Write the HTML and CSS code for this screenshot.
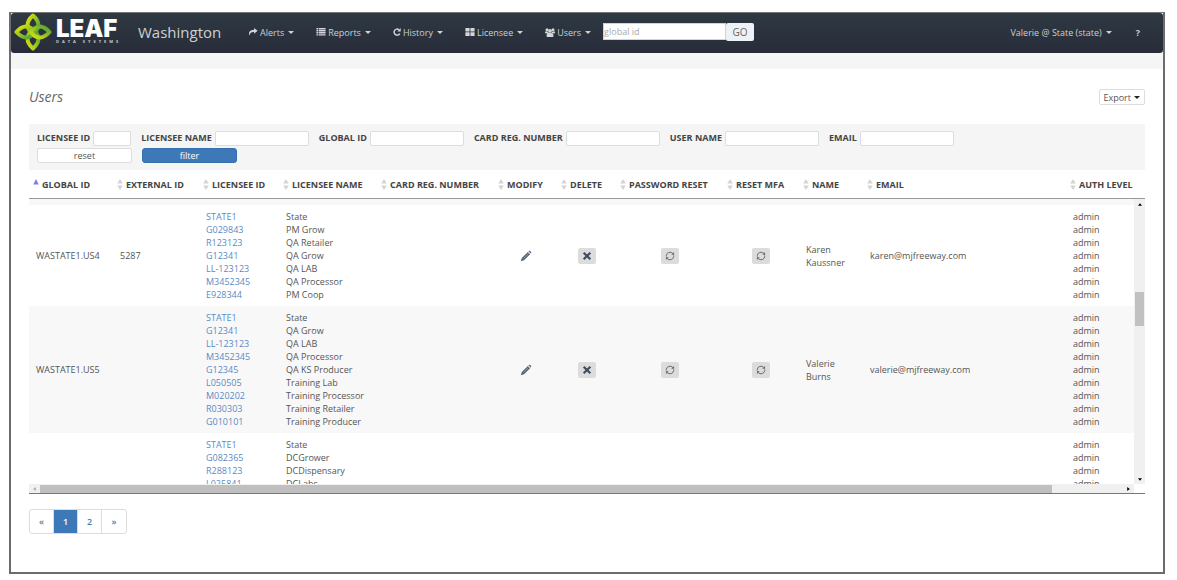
FILE: index.html
```
<!DOCTYPE html>
<html lang="en">
<head>
<meta charset="utf-8">
<title>Users - Leaf Data Systems</title>
<link rel="stylesheet" href="styles.css">
</head>
<body>
<svg class="defs" aria-hidden="true">
  <symbol id="i-edit" viewBox="0 0 16 16"><path fill="#5b6577" d="M1 15l1.400-4.400L10.500 2.500l3 3L5.400 13.600z"/><path fill="#5b6577" d="M11.200 1.800q1-1.200 2.300-.6l1.300 1.300q.7 1.300-.6 2.300z"/><path stroke="#98a0ae" stroke-width="1" d="M4.500 11.500l7-7"/></symbol>
  <symbol id="i-x" viewBox="0 0 12 12"><path d="M2 2l8 8M10 2l-8 8" stroke="#3f4c5e" stroke-width="2.600" fill="none"/></symbol>
  <symbol id="i-refresh" viewBox="0 0 16 16"><path d="M2 9V7.500a6 6 0 0 1 10.500-3.500M14 7v1.500a6 6 0 0 1-10.500 3.500" fill="none" stroke="#666" stroke-width="1.500"/><path fill="#666" d="M14.500 1.500V6H10zM1.500 14.500V10H6z"/></symbol>
  <symbol id="i-sort" viewBox="0 0 6 12"><path d="M3 0l3 5H0zM3 12l3-5H0z" fill="#d4d4d4"/></symbol>
</svg>
<div class="frame">
  <header class="navbar">
    <a class="brand" href="#" aria-label="Leaf Data Systems">
      <svg class="logo" viewBox="0 0 38 38">
        <defs>
          <linearGradient id="g1" x1="0" y1="0" x2="1" y2="1"><stop offset="0" stop-color="#e6e60a"/><stop offset="1" stop-color="#3f9a3c"/></linearGradient>
          <linearGradient id="g2" x1="1" y1="0" x2="0" y2="1"><stop offset="0" stop-color="#4aa03a"/><stop offset="1" stop-color="#dfe20c"/></linearGradient>
        </defs>
        <g fill="none" stroke-width="4" stroke-linejoin="round">
          <path stroke="url(#g1)" d="M19 2.500C11.500 9 12 16 19 21C26 16 26.500 9 19 2.500z"/>
          <path stroke="url(#g2)" d="M19 35.500C11.500 29 12 22 19 17C26 22 26.500 29 19 35.500z"/>
          <path stroke="url(#g1)" d="M2.500 19C9 11.500 16 12 21 19C16 26 9 26.500 2.500 19z"/>
          <path stroke="url(#g2)" d="M35.500 19C29 11.500 22 12 17 19C22 26 29 26.500 35.500 19z"/>
        </g>
      </svg>
      <span class="wordmark"><span class="leaf">LEAF</span><span class="tag">DATA SYSTEMS</span></span>
    </a>
    <span class="place">Washington</span>
    <nav class="menu">
      <button type="button"><svg class="ic" viewBox="0 0 16 14"><path d="M10 0l6 5-6 5V7C5 7 3 8 2.500 13 0 10 0 3.500 10 3z"/></svg>Alerts<i class="caret"></i></button>
      <button type="button"><svg class="ic" viewBox="0 0 16 14"><path d="M0 0h3v2.500H0zM4 0h12v2.500H4zM0 3.600h3v2.500H0zM4 3.600h12v2.500H4zM0 7.200h3v2.500H0zM4 7.200h12v2.500H4zM0 10.800h3v2.500H0zM4 10.800h12v2.500H4z"/></svg>Reports<i class="caret"></i></button>
      <button type="button"><svg class="ic ic-sq" viewBox="0 0 14 14"><path d="M11.800 9.800A5.300 5.300 0 1 1 10.500 3" fill="none" stroke="#d3d6da" stroke-width="2.500"/><path d="M13.500 0v6.200H7.500z"/></svg>History<i class="caret"></i></button>
      <button type="button"><svg class="ic" viewBox="0 0 16 14"><path d="M0 0h7.300v6.200H0zM8.700 0H16v6.200H8.700zM0 7.600h7.300v6.200H0zM8.700 7.600H16v6.200H8.700z"/></svg>Licensee<i class="caret"></i></button>
      <button type="button"><svg class="ic ic-users" viewBox="0 0 18 16"><circle cx="3.600" cy="3" r="2.700"/><circle cx="14.400" cy="3" r="2.700"/><circle cx="9" cy="5" r="3.500"/><path d="M0 9.500V6.500q2-1.500 5 0Q5.500 8 6.500 9.500zM18 9.500V6.500q-2-1.500-5 0Q12.500 8 11.500 9.500zM3 16V11q1-2.500 3.500-2.500h5Q14 8.500 15 11v5z"/></svg>Users<i class="caret"></i></button>
    </nav>
    <form class="search"><input type="text" placeholder="global id" aria-label="global id"><button type="button">GO</button></form>
    <div class="account">
      <button type="button">Valerie @ State (state)<i class="caret"></i></button>
      <button type="button" class="help">?</button>
    </div>
  </header>
  <div class="strip"></div>
  <main class="content">
    <div class="title-row"><h1>Users</h1><button type="button" class="export">Export<i class="caret"></i></button></div>
    <form class="filters">
      <div class="fields">
        <label>LICENSEE ID<input class="short" type="text"></label>
        <label>LICENSEE NAME<input type="text"></label>
        <label>GLOBAL ID<input type="text"></label>
        <label>CARD REG. NUMBER<input type="text"></label>
        <label>USER NAME<input type="text"></label>
        <label>EMAIL<input type="text"></label>
      </div>
      <div class="actions"><button type="reset">reset</button><button type="button" class="primary">filter</button></div>
    </form>
    <div class="head">
      <table>
        <colgroup><col class="c1"><col class="c2"><col class="c3"><col class="c4"><col class="c5"><col class="c6"><col class="c7"><col class="c8"><col class="c9"><col class="c10"><col><col class="c12"></colgroup>
        <thead><tr>
          <th><svg viewBox="0 0 6 12"><path d="M3 0l3 6H0z" fill="#7f80e6"/></svg>GLOBAL ID</th>
          <th><svg><use href="#i-sort"/></svg>EXTERNAL ID</th>
          <th><svg><use href="#i-sort"/></svg>LICENSEE ID</th>
          <th><svg><use href="#i-sort"/></svg>LICENSEE NAME</th>
          <th><svg><use href="#i-sort"/></svg>CARD REG. NUMBER</th>
          <th><svg><use href="#i-sort"/></svg>MODIFY</th>
          <th><svg><use href="#i-sort"/></svg>DELETE</th>
          <th><svg><use href="#i-sort"/></svg>PASSWORD RESET</th>
          <th><svg><use href="#i-sort"/></svg>RESET MFA</th>
          <th><svg><use href="#i-sort"/></svg>NAME</th>
          <th><svg><use href="#i-sort"/></svg>EMAIL</th>
          <th><svg><use href="#i-sort"/></svg>AUTH LEVEL</th>
        </tr></thead>
      </table>
    </div>
    <div class="scroller">
      <div class="view">
        <table>
          <colgroup><col class="c1"><col class="c2"><col class="c3"><col class="c4"><col class="c5"><col class="c6"><col class="c7"><col class="c8"><col class="c9"><col class="c10"><col><col class="c12"></colgroup>
          <tbody>
            <tr class="previous"><td colspan="12"></td></tr>
            <tr>
              <td>WASTATE1.US4</td><td>5287</td>
              <td><a href="#">STATE1</a><a href="#">G029843</a><a href="#">R123123</a><a href="#">G12341</a><a href="#">LL-123123</a><a href="#">M3452345</a><a href="#">E928344</a></td>
              <td>State<br>PM Grow<br>QA Retailer<br>QA Grow<br>QA LAB<br>QA Processor<br>PM Coop</td>
              <td></td>
              <td class="mid"><button type="button" class="plain" aria-label="Modify"><svg><use href="#i-edit"/></svg></button></td>
              <td class="mid"><button type="button" class="act" aria-label="Delete"><svg><use href="#i-x"/></svg></button></td>
              <td class="mid"><button type="button" class="act" aria-label="Reset password"><svg><use href="#i-refresh"/></svg></button></td>
              <td class="mid"><button type="button" class="act" aria-label="Reset MFA"><svg><use href="#i-refresh"/></svg></button></td>
              <td>Karen Kaussner</td><td>karen@mjfreeway.com</td>
              <td>admin<br>admin<br>admin<br>admin<br>admin<br>admin<br>admin</td>
            </tr>
            <tr class="odd">
              <td>WASTATE1.US5</td><td></td>
              <td><a href="#">STATE1</a><a href="#">G12341</a><a href="#">LL-123123</a><a href="#">M3452345</a><a href="#">G12345</a><a href="#">L050505</a><a href="#">M020202</a><a href="#">R030303</a><a href="#">G010101</a></td>
              <td>State<br>QA Grow<br>QA LAB<br>QA Processor<br>QA KS Producer<br>Training Lab<br>Training Processor<br>Training Retailer<br>Training Producer</td>
              <td></td>
              <td class="mid"><button type="button" class="plain" aria-label="Modify"><svg><use href="#i-edit"/></svg></button></td>
              <td class="mid"><button type="button" class="act" aria-label="Delete"><svg><use href="#i-x"/></svg></button></td>
              <td class="mid"><button type="button" class="act" aria-label="Reset password"><svg><use href="#i-refresh"/></svg></button></td>
              <td class="mid"><button type="button" class="act" aria-label="Reset MFA"><svg><use href="#i-refresh"/></svg></button></td>
              <td>Valerie Burns</td><td>valerie@mjfreeway.com</td>
              <td>admin<br>admin<br>admin<br>admin<br>admin<br>admin<br>admin<br>admin<br>admin</td>
            </tr>
            <tr>
              <td></td><td></td>
              <td><a href="#">STATE1</a><a href="#">G082365</a><a href="#">R288123</a><a href="#">L025841</a></td>
              <td>State<br>DCGrower<br>DCDispensary<br>DCLabs</td>
              <td></td><td></td><td></td><td></td><td></td><td></td><td></td>
              <td>admin<br>admin<br>admin<br>admin</td>
            </tr>
          </tbody>
        </table>
      </div>
      <div class="vbar"><svg viewBox="0 0 6 4"><path d="M0 4l3-4 3 4z"/></svg><div class="vtrack"><div class="vthumb"></div></div><svg viewBox="0 0 6 4"><path d="M0 0l3 4 3-4z"/></svg></div>
      <div class="hbar"><svg class="dim" viewBox="0 0 4 6"><path d="M4 0L0 3l4 3z"/></svg><div class="htrack"><div class="hthumb"></div></div><svg viewBox="0 0 4 6"><path d="M0 0l4 3-4 3z"/></svg></div>
    </div>
    <nav class="pages" aria-label="Pages"><a class="off" href="#">«</a><a class="current" href="#">1</a><a href="#">2</a><a href="#">»</a></nav>
  </main>
</div>
</body>
</html>
```
FILE: styles.css
```
* { box-sizing: border-box; }
body {
  margin: 12px 12px 0 9px;
  background: #fff;
  color: #555;
  font-family: "Open Sans", "Noto Sans", sans-serif;
  font-size: 9px;
  line-height: 13px;
}
button, input { font: inherit; color: inherit; margin: 0; padding: 0; }
button { border: 0; background: none; }
a { color: #5b8ac4; text-decoration: none; }
.defs { display: none; }
.frame { border: 2px solid #6c6c6c; border-top: 1px solid #777; padding-bottom: 38px; }
.navbar {
  display: flex;
  align-items: center;
  height: 40px;
  padding: 0 23px 2px 3px;
  border-radius: 3px;
  background: linear-gradient(#2e3942, #282c3a);
  color: #cdd0d4;
}
.brand { display: flex; align-items: center; gap: 4px; color: #fff; }
.logo { width: 38px; height: 38px; }
.wordmark { display: flex; flex-direction: column; width: 65px; }
.leaf { font-family: Inter, "Open Sans", sans-serif; font-size: 24px; font-weight: 900; line-height: 20px; }
.tag { font-size: 4px; font-weight: 700; line-height: 6px; letter-spacing: 3px; white-space: nowrap; color: #c9ccd0; }
.place { margin-left: 17px; width: 110px; font-size: 15px; line-height: 20px; }
.menu { display: flex; gap: 22px; }
.menu button, .account button { display: flex; align-items: center; white-space: nowrap; }
.ic { width: 10px; height: 8px; margin-right: 2px; fill: #d3d6da; }
.ic-sq { width: 8px; }
.ic-users { height: 9px; }
.caret {
  width: 0;
  height: 0;
  margin-left: 4px;
  border: 3px solid transparent;
  border-top-color: currentColor;
  border-bottom: 0;
}
.search { display: flex; margin-left: 12px; }
.search input { width: 123px; height: 17px; border: 1px solid #cfd3da; background: #fff; color: #555; }
.search input::placeholder { color: #aaa; }
.search button { width: 28px; height: 18px; border-radius: 2px; background: #eef1f5; color: #666; font-size: 10px; }
.account { display: flex; gap: 24px; margin-left: auto; }
.help { font-weight: 700; }
.strip { height: 16px; background: #f5f5f5; }
.content { padding: 20px 18px 0 18px; }
.title-row { display: flex; justify-content: space-between; align-items: center; height: 16px; }
h1 { margin: 0; font-size: 14px; font-weight: 400; font-style: italic; line-height: 16px; color: #666; }
.export { display: flex; align-items: center; height: 16px; padding: 0 4px 0 3px; border: 1px solid #ddd; border-radius: 2px; }
.export .caret { border-top-color: #222; margin-left: 3px; }
.filters { margin-top: 19px; padding: 7px 8px; background: #f5f5f5; }
.fields, .actions { display: flex; gap: 10px; }
.fields label { display: flex; align-items: flex-start; gap: 3px; font-weight: 700; color: #444; white-space: nowrap; }
.fields input { width: 94px; height: 15px; border: 1px solid #ddd; border-radius: 2px; background: #fff; }
.fields .short { width: 38px; }
.actions { margin-top: 2px; }
.actions button { width: 95px; height: 15px; border: 1px solid #ddd; border-radius: 2px; background: #fff; line-height: 12px; }
.actions .primary { border-color: #356fae; background: #3d79b9; color: #fff; border-radius: 3px; }
table { width: 100%; table-layout: fixed; border-collapse: collapse; }
.c1 { width: 84px; }
.c2 { width: 86px; }
.c3 { width: 80px; }
.c4 { width: 98px; }
.c5 { width: 117px; }
.c6 { width: 63px; }
.c7 { width: 59px; }
.c8 { width: 107px; }
.c9 { width: 76px; }
.c10 { width: 64px; }
.c12 { width: 68px; }
.head { padding-right: 11px; border-bottom: 1px solid #999; }
th { height: 28px; padding: 0 0 0 4px; text-align: left; font-weight: 700; color: #444; white-space: nowrap; }
th svg { width: 6px; height: 11px; margin-right: 3px; vertical-align: -2px; }
.scroller { display: grid; grid-template-columns: 1fr 11px; border-bottom: 1px solid #777; }
.view { height: 285px; overflow: hidden; }
td { padding: 5px 7px; vertical-align: middle; }
td a { display: block; }
.previous td { height: 6px; padding: 0; background: #f8f8f8; }
.odd td { background: #f8f8f8; }
.mid { padding: 0; text-align: center; }
.mid button { display: flex; align-items: center; justify-content: center; width: 18px; height: 16px; margin: 0 auto; }
.act { border-radius: 2px; background: #dcdcdc; }
.act svg { width: 10px; height: 10px; }
.plain svg { width: 12px; height: 12px; }
.vbar, .hbar { display: flex; align-items: center; background: #f0f0f0; }
.vbar { flex-direction: column; padding: 4px 1px 3px; }
.vbar svg { width: 4px; height: 3px; }
.hbar { padding: 1px 4px; height: 9px; }
.hbar svg { width: 3px; height: 4px; }
.hbar .dim { fill: #aaa; }
.vtrack { flex: 1; width: 100%; padding-top: 86px; }
.vthumb { height: 34px; background: #c1c1c1; }
.htrack { flex: 1; height: 8px; padding: 0 75px 0 4px; }
.hthumb { height: 8px; background: #bfbfbf; }
.pages { display: inline-flex; margin-top: 15px; border: 1px solid #ddd; border-radius: 3px; }
.pages a { width: 24px; padding: 5px 0; border-right: 1px solid #ddd; text-align: center; font-weight: 600; color: #4a7ebb; }
.pages a:last-child { border-right: 0; }
.pages .off { color: #777; }
.pages .current { background: #3d79b9; color: #fff; }
```
